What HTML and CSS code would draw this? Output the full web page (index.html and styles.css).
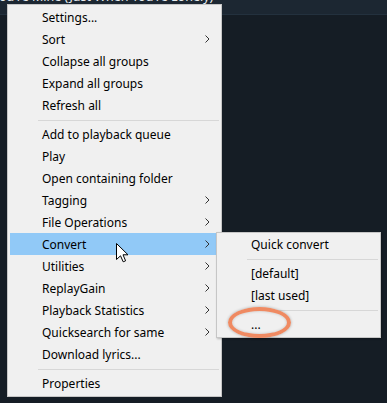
FILE: index.html
```html
<!DOCTYPE html>
<html lang="en">
<head>
    <meta charset="UTF-8">
    <title>Playlist context menu</title>
    <link rel="stylesheet" href="styles.css">
</head>
<body>
    <div class="screen">
        <div class="titlebar">
            <span class="title">ou're Mine (Just When You're Lonely)</span>
        </div>

        <div class="menu main-menu">
            <div class="item">Settings...</div>
            <div class="item has-sub">Sort<svg class="chev" width="5" height="8" viewBox="0 0 5 8"><path d="M0.5 0.5 L4 4 L0.5 7.5"/></svg></div>
            <div class="item">Collapse all groups</div>
            <div class="item">Expand all groups</div>
            <div class="item">Refresh all</div>
            <div class="sep"></div>
            <div class="item">Add to playback queue</div>
            <div class="item">Play</div>
            <div class="item">Open containing folder</div>
            <div class="item has-sub">Tagging<svg class="chev" width="5" height="8" viewBox="0 0 5 8"><path d="M0.5 0.5 L4 4 L0.5 7.5"/></svg></div>
            <div class="item has-sub">File Operations<svg class="chev" width="5" height="8" viewBox="0 0 5 8"><path d="M0.5 0.5 L4 4 L0.5 7.5"/></svg></div>
            <div class="item has-sub active">Convert<svg class="chev" width="5" height="8" viewBox="0 0 5 8"><path d="M0.5 0.5 L4 4 L0.5 7.5"/></svg></div>
            <div class="item has-sub">Utilities<svg class="chev" width="5" height="8" viewBox="0 0 5 8"><path d="M0.5 0.5 L4 4 L0.5 7.5"/></svg></div>
            <div class="item has-sub">ReplayGain<svg class="chev" width="5" height="8" viewBox="0 0 5 8"><path d="M0.5 0.5 L4 4 L0.5 7.5"/></svg></div>
            <div class="item has-sub">Playback Statistics<svg class="chev" width="5" height="8" viewBox="0 0 5 8"><path d="M0.5 0.5 L4 4 L0.5 7.5"/></svg></div>
            <div class="item has-sub">Quicksearch for same<svg class="chev" width="5" height="8" viewBox="0 0 5 8"><path d="M0.5 0.5 L4 4 L0.5 7.5"/></svg></div>
            <div class="item">Download lyrics...</div>
            <div class="sep"></div>
            <div class="item">Properties</div>
        </div>

        <div class="menu sub-menu">
            <div class="item">Quick convert</div>
            <div class="sep"></div>
            <div class="item">[default]</div>
            <div class="item">[last used]</div>
            <div class="sep"></div>
            <div class="item">...</div>
        </div>

        <svg class="pointer" width="13" height="20" viewBox="0 0 13 20">
            <path d="M0.5 0.5 L0.5 16.5 L4.5 12.8 L7.2 18.8 L9.6 17.8 L7 11.8 L12 11.8 Z"/>
        </svg>

        <div class="ring"></div>
    </div>
</body>
</html>
```

FILE: styles.css
```css
body {
    margin: 0;
    padding: 0;
    background-color: #151d25;
    font-family: 'Noto Sans', sans-serif;
}
.screen {
    position: relative;
    width: 387px;
    height: 403px;
    overflow: hidden;
    background-color: #151d25;
}
.titlebar {
    height: 14px;
    background: #1c2732;
    border-bottom: 1px solid #23313e;
    overflow: hidden;
}
.title {
    display: block;
    margin: -10px 0 0 -1px;
    font-size: 12.5px;
    line-height: 14px;
    color: #e8ecef;
    white-space: nowrap;
}
.menu {
    position: absolute;
    background: #f0f0f0;
    border: 1px solid #c6c6c6;
    padding: 1px 2px 2px;
    box-sizing: border-box;
    font-size: 12px;
    color: #000;
}
.main-menu {
    left: 7px;
    top: 4px;
    width: 215px;
    height: 393px;
}
.sub-menu {
    left: 216px;
    top: 232px;
    width: 165px;
    height: 106px;
    padding-top: 0;
    box-shadow: 1px 1px 2px rgba(0, 0, 0, 0.25);
}
.item {
    display: flex;
    align-items: center;
    height: 22px;
    padding-left: 32px;
    padding-right: 9px;
    white-space: nowrap;
}
.item.active {
    background: #91c9f7;
}
.chev {
    margin-left: auto;
    fill: none;
    stroke: #333;
    stroke-width: 1;
}
.sep {
    height: 1px;
    margin: 4px 0 2px 28px;
    background: #d7d7d7;
}
.pointer {
    position: absolute;
    left: 116px;
    top: 243px;
}
.pointer path {
    fill: #fff;
    stroke: #000;
    stroke-width: 1;
    stroke-linejoin: miter;
}
.ring {
    position: absolute;
    left: 228px;
    top: 307px;
    width: 63px;
    height: 31px;
    box-sizing: border-box;
    border: 4px solid #ef8a62;
    border-radius: 50%;
    box-shadow: 0 0 3px rgba(0, 0, 0, 0.3), inset 0 0 3px rgba(0, 0, 0, 0.2);
}
```
